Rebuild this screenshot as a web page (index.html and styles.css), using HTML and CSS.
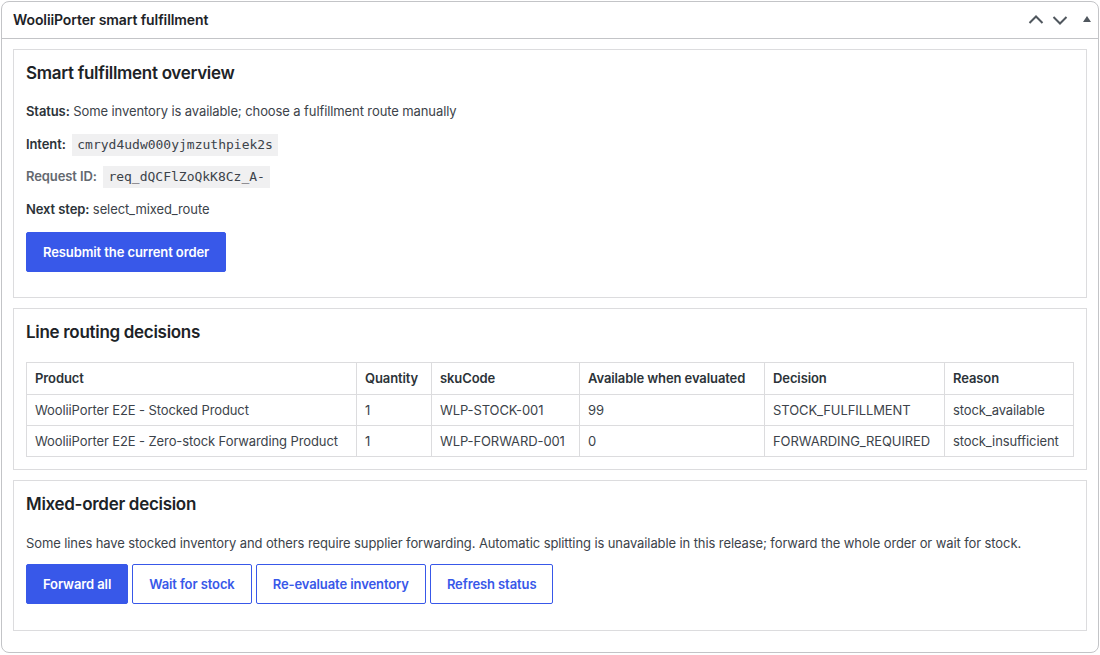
FILE: index.html
```html
<!DOCTYPE html>
<html lang="en" dir="ltr">
  <head>
    <meta charset="utf-8">
    <title>WooliiPorter smart fulfillment</title>
    <link rel="stylesheet" href="styles.css">
  </head>
  <body>

    <div class="postbox">
      <div class="postbox-header">
        <h2>WooliiPorter smart fulfillment</h2>
        <div class="handle-actions">
          <button class="handle up" aria-label="Move up">
            <svg width="16" height="16" viewBox="0 0 16 16"><path d="M1.5 11 L8 4.5 L14.5 11" fill="none" stroke="#50575e" stroke-width="2"/></svg>
          </button>
          <button class="handle down" aria-label="Move down">
            <svg width="16" height="16" viewBox="0 0 16 16"><path d="M1.5 5 L8 11.5 L14.5 5" fill="none" stroke="#50575e" stroke-width="2"/></svg>
          </button>
          <button class="handle toggle" aria-label="Toggle panel">
            <svg width="10" height="10" viewBox="0 0 10 10"><path d="M1 8 L5 2 L9 8 Z" fill="#50575e"/></svg>
          </button>
        </div>
      </div>

      <div class="inside">

        <div class="section">
          <h3>Smart fulfillment overview</h3>
          <p class="first"><strong>Status:</strong> Some inventory is available; choose a fulfillment route manually</p>
          <p class="intent"><strong>Intent:</strong> <code>cmryd4udw000yjmzuthpiek2s</code></p>
          <p class="muted"><strong>Request ID:</strong> <code>req_dQCFlZoQkK8Cz_A-</code></p>
          <p><strong>Next step:</strong> select_mixed_route</p>
          <p class="actions"><button class="btn primary">Resubmit the current order</button></p>
        </div>

        <div class="section">
          <h3>Line routing decisions</h3>
          <table class="routes">
            <thead>
              <tr>
                <th class="c-product">Product</th>
                <th class="c-qty">Quantity</th>
                <th class="c-sku">skuCode</th>
                <th class="c-avail">Available when evaluated</th>
                <th class="c-decision">Decision</th>
                <th>Reason</th>
              </tr>
            </thead>
            <tbody>
              <tr>
                <td>WooliiPorter E2E - Stocked Product</td>
                <td>1</td>
                <td>WLP-STOCK-001</td>
                <td>99</td>
                <td>STOCK_FULFILLMENT</td>
                <td>stock_available</td>
              </tr>
              <tr>
                <td>WooliiPorter E2E - Zero-stock Forwarding Product</td>
                <td>1</td>
                <td>WLP-FORWARD-001</td>
                <td>0</td>
                <td>FORWARDING_REQUIRED</td>
                <td>stock_insufficient</td>
              </tr>
            </tbody>
          </table>
        </div>

        <div class="section">
          <h3>Mixed-order decision</h3>
          <p class="note">Some lines have stocked inventory and others require supplier forwarding. Automatic splitting is unavailable in this release; forward the whole order or wait for stock.</p>
          <div class="button-row">
            <button class="btn primary">Forward all</button>
            <button class="btn">Wait for stock</button>
            <button class="btn">Re-evaluate inventory</button>
            <button class="btn">Refresh status</button>
          </div>
        </div>

      </div>
    </div>

  </body>
</html>
```

FILE: styles.css
```css
* {
  box-sizing: border-box;
}

body {
  margin: 0;
  background: #fff;
  color: #3c434a;
  font-family: Inter, "Noto Sans", sans-serif;
  font-size: 13px;
  line-height: 20px;
  letter-spacing: -0.1px;
}

/* outer meta box */
.postbox {
  margin: 1px;
  width: 1098px;
  border: 1px solid #c3c4c7;
  border-radius: 8px;
  background: #fff;
}

.postbox-header {
  height: 37px;
  border-bottom: 1px solid #c3c4c7;
  display: flex;
  align-items: center;
  justify-content: space-between;
  padding: 0 6px 0 11px;
}

.postbox-header h2 {
  margin: 0;
  font-size: 14px;
  font-weight: 600;
  color: #1d2327;
}

.handle-actions {
  display: flex;
  align-items: center;
}

.handle {
  border: 0;
  background: none;
  padding: 0;
  width: 16px;
  height: 16px;
  display: flex;
  align-items: center;
  justify-content: center;
}

.handle.down {
  margin-left: 8px;
}

.handle.toggle {
  width: 10px;
  margin-left: 14px;
  margin-top: -2px;
}

.inside {
  padding: 10px 11px 21px 11px;
}

/* inner sections */
.section {
  border: 1px solid #dcdcde;
  padding: 12px;
  margin-bottom: 10px;
}

.section:last-child {
  margin-bottom: 0;
}

.section h3 {
  margin: 0 0 17px;
  font-size: 17px;
  line-height: 22px;
  font-weight: 600;
  letter-spacing: -0.3px;
  color: #1d2327;
}

.section p {
  margin: 13px 0;
  height: 20px;
}

.section p.first {
  margin-top: 17px;
}

.section p.intent {
  margin-bottom: 12px;
}

.section p.muted {
  margin-top: 12px;
}

.section p.actions {
  height: 40px;
  margin-bottom: 13px;
}

strong {
  font-weight: 600;
  color: #2c3338;
}

.muted,
.muted strong {
  color: #646970;
}

code {
  display: inline-block;
  font-family: "DejaVu Sans Mono", "Liberation Mono", monospace;
  font-size: 13px;
  line-height: 16px;
  letter-spacing: 0;
  background: #f0f0f1;
  color: #3c434a;
  padding: 3px 5px;
  margin-left: 3px;
  vertical-align: baseline;
}

/* buttons */
.btn {
  font-family: inherit;
  font-size: 13px;
  font-weight: 600;
  letter-spacing: -0.1px;
  height: 40px;
  padding: 0 16px;
  border: 1px solid #3858e9;
  border-radius: 2px;
  background: #fff;
  color: #3858e9;
  cursor: pointer;
}

.btn.primary {
  background: #3858e9;
  color: #fff;
}

.button-row {
  display: flex;
  gap: 4px;
  margin: 11px 0 14px;
}

.section p.note {
  margin: 18px 0 0;
}

/* routing table */
.routes {
  width: 100%;
  border-collapse: collapse;
  margin: 19px 0 0;
}

.routes th,
.routes td {
  border: 1px solid #dcdcde;
  text-align: left;
  padding: 6px 8px 5px;
  line-height: 19px;
}

.routes th {
  font-weight: 600;
  color: #2c3338;
  padding-top: 6px;
  padding-bottom: 6px;
}

.c-product { width: 330px; }
.c-qty { width: 75px; }
.c-sku { width: 148px; }
.c-avail { width: 185px; }
.c-decision { width: 180px; }
```
